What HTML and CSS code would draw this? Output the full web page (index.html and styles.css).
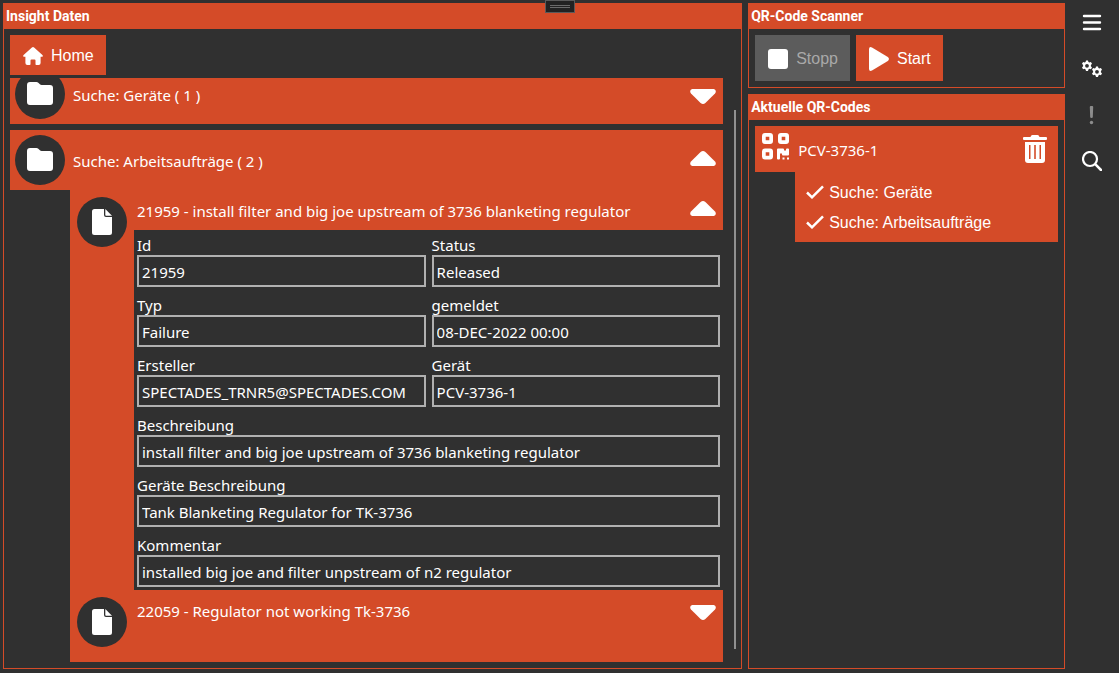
FILE: index.html
```html
<!DOCTYPE html>
<html lang="de">
<head>
<meta charset="utf-8">
<meta name="viewport" content="width=device-width, initial-scale=1">
<title>Insight Daten</title>
<link rel="stylesheet" href="styles.css">
</head>
<body>
<svg class="defs" aria-hidden="true">
  <symbol id="folder" viewBox="0 0 26 24"><path d="M3 0h6.500q1 0 1.800.8l1.600 1.500q.7.700 1.700.700H23q3 0 3 3v14q0 3-3 3H3q-3 0-3-3V3q0-3 3-3z"/></symbol>
  <symbol id="file" viewBox="0 0 20 26"><path d="M2.500 0H12v6q0 2 2 2h6v15.500q0 2.500-2.500 2.500h-15Q0 26 0 23.500v-21Q0 0 2.500 0z"/><path d="M13.300 0L20 6.700h-6q-.7 0-.7-.7z"/></symbol>
  <symbol id="caret" viewBox="0 0 26 16"><path d="M2.200 0h21.600q1.700.3 2 2 .1 1.500-.8 2.500L15.400 14q-2.400 2.200-4.800 0L1 4.500Q.1 3.500.2 2 .5.300 2.200 0z"/></symbol>
  <symbol id="check" viewBox="0 0 18 14"><path d="M1 7.500l5 4.800L17 1.300" fill="none" stroke="currentColor" stroke-width="2.500"/></symbol>
  <symbol id="gear" viewBox="-6 -6 12 12"><path fill-rule="evenodd" d="M-1-5.600h2l.4 1.500 1 .6 1.500-.5 1.100 1.800L3.900-1v1.200L5 1.400 3.900 3.200l-1.500-.4-1 .6-.4 1.600h-2l-.4-1.600-1-.6-1.500.4L-5 1.400-3.900.2V-1L-5-2.200l1.100-1.800 1.500.5 1-.6zM0-2.100a1.900 1.900 0 1 0 0 3.800 1.900 1.900 0 0 0 0-3.800z"/></symbol>
</svg>

<button class="tab-handle" aria-label="Leiste öffnen"><span></span><span></span></button>

<main class="panels">
  <section class="panel data-panel">
    <h2 class="panel-title">Insight Daten</h2>
    <div class="data-body">
      <button class="btn btn-home">
        <svg class="icon-home" viewBox="0 0 20 18" aria-hidden="true"><path d="M10 0q.6 0 1.100.4l8.300 7.500q1 1.300-.2 1.900h-1.600v6.200q0 2-2 2h-2.300q-.8 0-.8-.8v-3.700q0-1-1-1h-3q-1 0-1 1v3.700q0 .8-.8.800H4.400q-2 0-2-2V9.800H.8Q-.4 9.200.6 7.900L8.900.4Q9.400 0 10 0z"/></svg>
        Home
      </button>
      <div class="scroller">
        <div class="viewport">
          <div class="results">
            <article class="result">
              <header class="result-head">
                <span class="disc"><svg class="icon-folder" aria-hidden="true"><use href="#folder"/></svg></span>
                <h3 class="name">Suche: Geräte ( 1 )</h3>
                <button class="toggle" aria-expanded="false" aria-label="Geräte aufklappen"><svg class="caret" aria-hidden="true"><use href="#caret"/></svg></button>
              </header>
            </article>
            <article class="result">
              <header class="result-head">
                <span class="disc"><svg class="icon-folder" aria-hidden="true"><use href="#folder"/></svg></span>
                <h3 class="name">Suche: Arbeitsaufträge ( 2 )</h3>
                <button class="toggle" aria-expanded="true" aria-label="Arbeitsaufträge zuklappen"><svg class="caret up" aria-hidden="true"><use href="#caret"/></svg></button>
              </header>
              <div class="orders">
                <section class="order">
                  <span class="disc"><svg class="icon-file" aria-hidden="true"><use href="#file"/></svg></span>
                  <div class="order-main">
                    <header class="order-head">
                      <h4 class="name">21959 - install filter and big joe upstream of 3736 blanketing regulator</h4>
                      <button class="toggle" aria-expanded="true" aria-label="21959 zuklappen"><svg class="caret up" aria-hidden="true"><use href="#caret"/></svg></button>
                    </header>
                    <div class="fields">
                      <div class="field"><label for="f-id">Id</label><input id="f-id" readonly value="21959"></div>
                      <div class="field"><label for="f-status">Status</label><input id="f-status" readonly value="Released"></div>
                      <div class="field"><label for="f-typ">Typ</label><input id="f-typ" readonly value="Failure"></div>
                      <div class="field"><label for="f-date">gemeldet</label><input id="f-date" readonly value="08-DEC-2022 00:00"></div>
                      <div class="field"><label for="f-user">Ersteller</label><input id="f-user" readonly value="SPECTADES_TRNR5@SPECTADES.COM"></div>
                      <div class="field"><label for="f-device">Gerät</label><input id="f-device" readonly value="PCV-3736-1"></div>
                      <div class="field wide"><label for="f-desc">Beschreibung</label><input id="f-desc" readonly value="install filter and big joe upstream of 3736 blanketing regulator"></div>
                      <div class="field wide"><label for="f-devdesc">Geräte Beschreibung</label><input id="f-devdesc" readonly value="Tank Blanketing Regulator for TK-3736"></div>
                      <div class="field wide"><label for="f-comment">Kommentar</label><input id="f-comment" readonly value="installed big joe and filter unpstream of n2 regulator"></div>
                    </div>
                  </div>
                </section>
                <section class="order">
                  <span class="disc"><svg class="icon-file" aria-hidden="true"><use href="#file"/></svg></span>
                  <div class="order-main">
                    <header class="order-head">
                      <h4 class="name">22059 - Regulator not working Tk-3736</h4>
                      <button class="toggle" aria-expanded="false" aria-label="22059 aufklappen"><svg class="caret" aria-hidden="true"><use href="#caret"/></svg></button>
                    </header>
                  </div>
                </section>
              </div>
            </article>
          </div>
        </div>
        <div class="scroll-thumb"></div>
      </div>
    </div>
  </section>

  <div class="side">
    <section class="panel">
      <h2 class="panel-title">QR-Code Scanner</h2>
      <div class="scanner">
        <button class="btn btn-scan" disabled>
          <svg class="icon-stop" viewBox="0 0 20 20" aria-hidden="true"><rect width="20" height="20" rx="3"/></svg>
          Stopp
        </button>
        <button class="btn btn-scan">
          <svg class="icon-play" viewBox="0 0 20 24" aria-hidden="true"><path d="M0 2Q.2-.8 3 .5l15.800 9.600q2.300 1.900 0 3.800L3 23.500Q.2 24.800 0 22z"/></svg>
          Start
        </button>
      </div>
    </section>
    <section class="panel codes-panel">
      <h2 class="panel-title">Aktuelle QR-Codes</h2>
      <div class="codes">
        <div class="code-head">
          <svg class="icon-qr" viewBox="0 0 27 27" aria-hidden="true"><path fill-rule="evenodd" d="M3 0h5q3 0 3 3v5q0 3-3 3H3q-3 0-3-3V3q0-3 3-3zm.7 3.700v3.600h3.600V3.700zM19 0h5q3 0 3 3v5q0 3-3 3h-5q-3 0-3-3V3q0-3 3-3zm.7 3.700v3.600h3.600V3.700zM3 15.500h5q3 0 3 3v5q0 3-3 3H3q-3 0-3-3v-5q0-3 3-3zm.7 3.700v3.600h3.600v-3.600z"/><path d="M15 16.500q0-1 1-1h5q1 0 1 1v1h2v-1q0-1 1-1h1q1 0 1 1v5q0 1-1 1h-5q-1 0-1-1v-1h-2v5q0 1-1 1h-1q-1 0-1-1zM20.500 24.500h2v2h-2zM25 24.500h2v2h-2z"/></svg>
          <span class="name">PCV-3736-1</span>
          <button class="trash" aria-label="Löschen">
            <svg class="icon-trash" viewBox="0 0 24 28" aria-hidden="true"><path d="M1 2h6.500l.6-1.200Q8.600 0 9.500 0h5q.9 0 1.400.8l.6 1.200H23q1 0 1 1v1q0 1-1 1H1Q0 5 0 4V3q0-1 1-1z"/><path fill-rule="evenodd" d="M2 7h20v18q0 3-3 3H5q-3 0-3-3zm4 3v14h1.500V10zm5.200 0v14h1.600V10zm5.300 0v14H18V10z"/></svg>
          </button>
        </div>
        <ul class="checks">
          <li><svg class="icon-check" aria-hidden="true"><use href="#check"/></svg><span class="check-text">Suche: Geräte</span></li>
          <li><svg class="icon-check" aria-hidden="true"><use href="#check"/></svg><span class="check-text">Suche: Arbeitsaufträge</span></li>
        </ul>
      </div>
    </section>
  </div>
</main>

<nav class="rail">
  <button aria-label="Menü"><svg viewBox="0 0 20 20" aria-hidden="true"><path d="M2 3h16M2 9.500h16M2 16h16" stroke="currentColor" stroke-width="2.400" stroke-linecap="round"/></svg></button>
  <button aria-label="Einstellungen"><svg viewBox="0 0 20 20" aria-hidden="true"><use href="#gear" x="-1" y="1" width="12" height="12"/><use href="#gear" x="9" y="7" width="12" height="12"/></svg></button>
  <button class="muted" aria-label="Meldungen"><svg viewBox="0 0 20 20" aria-hidden="true"><path d="M7.800 2q0-1 1-1h1.400q1 0 1 1l-.4 10q0 1-1.300 1t-1.300-1z"/><circle cx="9.500" cy="17.500" r="1.700"/></svg></button>
  <button aria-label="Suchen"><svg viewBox="0 0 20 20" aria-hidden="true"><path d="M13.700 13.700L19 19" stroke="currentColor" stroke-width="2.500" stroke-linecap="round"/><circle cx="8" cy="8" r="7" fill="none" stroke="currentColor" stroke-width="2.200"/></svg></button>
</nav>
</body>
</html>
```

FILE: styles.css
```css
:root {
  --bg: #303030;
  --accent: #d44b28;
  --ui: "Noto Sans", "Open Sans", sans-serif;
  --sans: "Liberation Sans", Arial, sans-serif;
  --title: Roboto, "Liberation Sans", sans-serif;
}

* { box-sizing: border-box; }

body {
  display: flex;
  min-height: 100vh;
  margin: 0;
  background: var(--bg);
  color: #fff;
  font: 15px/20px var(--ui);
}

button {
  border: 0;
  padding: 0;
  background: none;
  color: inherit;
  font: inherit;
}

svg { display: block; flex: none; fill: currentColor; }
h2, h3, h4, ul { margin: 0; padding: 0; font: inherit; }

.defs { position: absolute; width: 0; height: 0; }

.tab-handle {
  position: absolute;
  top: 0;
  left: 50%;
  display: flex;
  flex-direction: column;
  justify-content: center;
  gap: 1px;
  width: 30px;
  height: 13px;
  margin-left: -15px;
  padding: 0 4px;
  border: 1px solid #5a5a5a;
  background: #222;
}
.tab-handle span { height: 1px; background: #6a6a6a; }

.panels {
  flex: 1;
  display: grid;
  grid-template-columns: 7fr 3fr;
  gap: 6px;
  padding: 3px 0 4px 3px;
}

.panel {
  display: flex;
  flex-direction: column;
  border: 1px solid var(--accent);
}
.panel-title {
  padding: 0 2px;
  background: var(--accent);
  font: bold 14px/25px var(--title);
}

.btn {
  display: flex;
  align-items: center;
  padding: 1px 12px 0 13px;
  gap: 8px;
  background: var(--accent);
  font: 16px/20px var(--sans);
}
.btn:disabled { background: #5c5c5c; color: #a9a9a9; }

.data-body {
  flex: 1;
  display: flex;
  flex-direction: column;
  align-items: flex-start;
  gap: 3px;
  padding: 6px 5px 6px 6px;
}
.btn-home { height: 40px; }
.icon-home { width: 20px; height: 18px; }

.scroller { flex: 1; display: flex; align-self: stretch; gap: 11px; }
.viewport { flex: 1; overflow: hidden; }
.results {
  display: flex;
  flex-direction: column;
  gap: 6px;
  margin-top: -14px;
}
.scroll-thumb { width: 2px; margin: 32px 0 13px; background: #909090; }

.result-head {
  display: flex;
  align-items: center;
  gap: 8px;
  height: 60px;
  padding: 0 7px 0 5px;
  background: var(--accent);
}
.disc {
  flex: none;
  display: grid;
  place-items: center;
  width: 50px;
  height: 50px;
  border-radius: 50%;
  background: var(--bg);
}
.icon-folder { width: 26px; height: 24px; }
.icon-file { width: 20px; height: 26px; }
.name { flex: 1; padding-top: 2px; }
.toggle { padding-top: 5px; }
.toggle[aria-expanded="true"] { padding: 0 0 5px; }
.caret { width: 26px; height: 16px; }
.caret.up { transform: rotate(180deg); }

.orders { margin-left: 60px; background: var(--accent); }
.order { display: flex; gap: 7px; min-height: 72px; padding-left: 7px; }
.order .disc { margin-top: 7px; }
.order-main { flex: 1; }
.order-head {
  display: flex;
  align-items: center;
  height: 40px;
  padding: 0 7px 0 3px;
}

.fields {
  display: grid;
  grid-template-columns: 1fr 1fr;
  gap: 3px 6px;
  padding: 0 3px 3px;
  background: var(--bg);
}
.wide { grid-column: 1 / -1; }
.field label { display: block; height: 25px; padding-top: 5px; }
.field input {
  display: block;
  width: 100%;
  height: 32px;
  padding: 2px 3px 0;
  border: 2px solid #b0b0b0;
  border-radius: 0;
  outline: 0;
  background: var(--bg);
  color: #fff;
  font: inherit;
}

.side { display: flex; flex-direction: column; gap: 6px; }
.scanner { display: flex; gap: 6px; padding: 6px; }
.btn-scan { height: 46px; }
.icon-stop { width: 20px; height: 20px; color: #fff; }
.icon-play { width: 20px; height: 24px; }

.codes-panel { flex: 1; }
.codes { padding: 6px; }
.code-head {
  display: flex;
  align-items: center;
  gap: 9px;
  height: 46px;
  padding: 0 11px 0 7px;
  background: var(--accent);
}
.icon-qr { width: 27px; height: 27px; margin-bottom: 6px; }
.icon-trash { width: 24px; height: 28px; }
.checks {
  margin-left: 40px;
  padding: 5px 11px;
  background: var(--accent);
  font: 16px/28px var(--sans);
  list-style: none;
}
.checks li { display: flex; align-items: center; gap: 5px; }
.check-text { padding-top: 2px; }
.icon-check { width: 18px; height: 14px; }

.rail {
  display: flex;
  flex-direction: column;
  align-items: center;
  gap: 26px;
  width: 54px;
  padding-top: 13px;
}
.rail svg { width: 20px; height: 20px; }
.rail .muted { color: #8c8c8c; }
```
